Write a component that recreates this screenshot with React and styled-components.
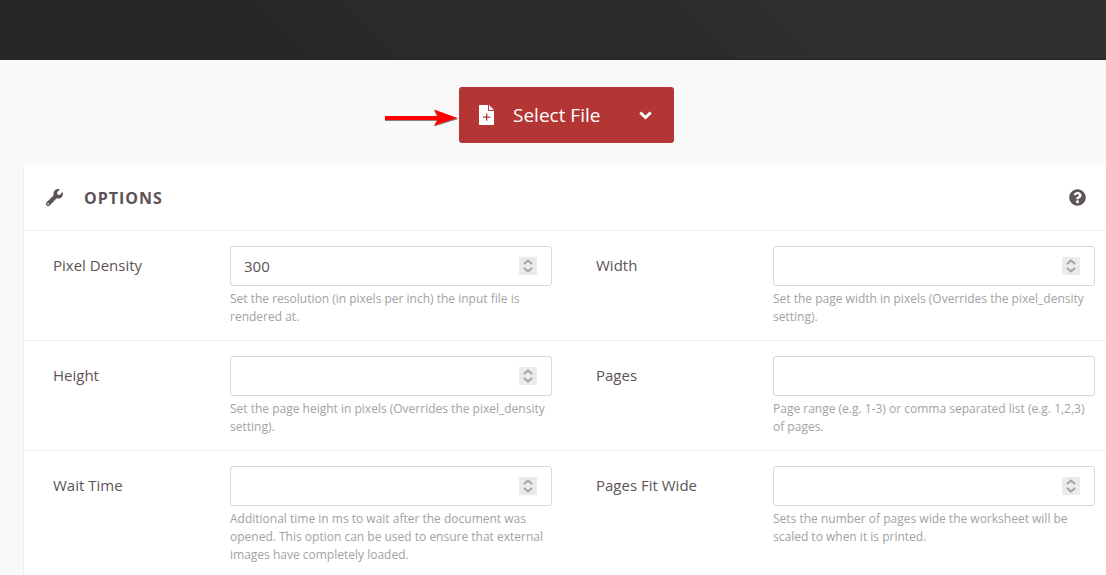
import React from 'react';
import styled, { createGlobalStyle } from 'styled-components';
import { FaWrench, FaQuestionCircle } from 'react-icons/fa';

const options = [
  {
    id: 'pixel_density',
    label: 'Pixel Density',
    value: '300',
    type: 'number',
    help: 'Set the resolution (in pixels per inch) the input file is rendered at.'
  },
  {
    id: 'width',
    label: 'Width',
    type: 'number',
    help: 'Set the page width in pixels (Overrides the pixel_density setting).'
  },
  {
    id: 'height',
    label: 'Height',
    type: 'number',
    help: 'Set the page height in pixels (Overrides the pixel_density setting).'
  },
  {
    id: 'pages',
    label: 'Pages',
    type: 'text',
    help: 'Page range (e.g. 1-3) or comma separated list (e.g. 1,2,3) of pages.'
  },
  {
    id: 'wait_time',
    label: 'Wait Time',
    type: 'number',
    help: 'Additional time in ms to wait after the document was opened. This option can be used to ensure that external images have completely loaded.'
  },
  {
    id: 'pages_fit_wide',
    label: 'Pages Fit Wide',
    type: 'number',
    help: 'Sets the number of pages wide the worksheet will be scaled to when it is printed.'
  }
];

// two options per row
const rows = [options.slice(0, 2), options.slice(2, 4), options.slice(4, 6)];

function FileAddIcon() {
  return (
    <svg width="15" height="20" viewBox="0 0 15 20" aria-hidden="true">
      <path
        fill="#fff"
        fillRule="evenodd"
        d="M1 0h8v5.2c0 .5.4.8.8.8H15v13c0 .6-.4 1-1 1H1c-.6 0-1-.4-1-1V1c0-.6.4-1 1-1zm6 8.500v3H4v1.300h3v3h1.300v-3h3v-1.300h-3v-3z"
      />
      <path fill="#fff" d="M10 0l5 5h-5z" />
    </svg>
  );
}

function ChevronIcon() {
  return (
    <svg width="13" height="9" viewBox="0 0 13 9" aria-hidden="true">
      <path fill="none" stroke="#fff" strokeWidth="3" d="M1.300 1.500l5.200 5 5.200-5" />
    </svg>
  );
}

function Arrow() {
  return (
    <svg width="74" height="18" viewBox="0 0 74 18" aria-hidden="true">
      <path fill="#8a8080" d="M0 7.500h52l-3-6L73.500 10 49 17.500l3-5.500H0z" />
      <path fill="#fe0000" d="M0 7h53l-4-6.500L72.500 9 49 16.500l3.500-5.500H0z" />
    </svg>
  );
}

function OptionField({ option }) {
  return (
    <Field>
      <Label htmlFor={option.id}>{option.label}</Label>
      <div>
        <InputBox>
          <Input
            id={option.id}
            type={option.type}
            defaultValue={option.value}
            aria-describedby={`${option.id}_help`}
          />
          {option.type === 'number' && (
            <Spinner width="18" height="18" viewBox="0 0 18 18" aria-hidden="true">
              <path d="M5 7l4-3.500L13 7M5 11l4 3.500 4-3.500" />
            </Spinner>
          )}
        </InputBox>
        <Help id={`${option.id}_help`}>{option.help}</Help>
      </div>
    </Field>
  );
}

export default function App() {
  return (
    <>
      <GlobalStyle />
      <Banner />
      <Content>
        <SelectArea>
          <ButtonWrap>
            <ArrowBox>
              <Arrow />
            </ArrowBox>
            <SelectButton type="button">
              <FileAddIcon />
              <span>Select File</span>
              <ChevronIcon />
            </SelectButton>
          </ButtonWrap>
        </SelectArea>
        <Panel>
          <PanelHeader>
            <FaWrench size={17} />
            <PanelTitle>Options</PanelTitle>
            <HelpButton type="button" aria-label="Help">
              <FaQuestionCircle size={17} />
            </HelpButton>
          </PanelHeader>
          {rows.map((row) => (
            <Row key={row[0].id}>
              {row.map((option) => (
                <OptionField key={option.id} option={option} />
              ))}
            </Row>
          ))}
        </Panel>
      </Content>
    </>
  );
}

const GlobalStyle = createGlobalStyle`
  * {
    box-sizing: border-box;
  }

  body {
    margin: 0;
    background-color: #f9f9f9;
    color: #5c5457;
    font-family: 'Open Sans', sans-serif;
    font-size: 15px;
    overflow: hidden;
  }
`;

const Banner = styled.header`
  height: 60px;
  border-bottom: 1px solid #262626;
  background: linear-gradient(
    45deg,
    #272727 27%,
    #282828 27%,
    #282828 34%,
    #2a2a2a 34%,
    #2a2a2a 41%,
    #2b2b2b 41%,
    #2b2b2b 63%,
    #2d2d2d 63%,
    #2d2d2d 70%,
    #303030 70%
  );
`;

const Content = styled.main`
  padding-left: 23px;
`;

const SelectArea = styled.div`
  display: flex;
  justify-content: center;
  padding: 27px 0 22px 4px;
`;

const ButtonWrap = styled.div`
  position: relative;
`;

const ArrowBox = styled.div`
  position: absolute;
  right: 100%;
  top: 22px;
  line-height: 0;
`;

const SelectButton = styled.button`
  display: flex;
  align-items: center;
  width: 215px;
  height: 56px;
  padding: 0 22px 0 20px;
  border: none;
  border-radius: 3px;
  background-color: #b33635;
  color: #fff;
  font-family: inherit;
  font-size: 19px;
  cursor: pointer;

  & span {
    flex: 1;
    padding-left: 19px;
    text-align: left;
  }
`;

const Panel = styled.section`
  border-left: 1px solid #eee;
  background-color: #fff;
`;

const PanelHeader = styled.div`
  display: flex;
  align-items: center;
  height: 65px;
  padding: 0 20px 0 22px;
`;

const PanelTitle = styled.h2`
  flex: 1;
  margin: 0;
  padding-left: 21px;
  font-size: 16px;
  font-weight: 700;
  letter-spacing: 1px;
  text-transform: uppercase;
`;

const HelpButton = styled.button`
  display: flex;
  padding: 0;
  border: none;
  background: none;
  color: inherit;
  cursor: pointer;
`;

const Row = styled.div`
  display: grid;
  grid-template-columns: 1fr 1fr;
  column-gap: 44px;
  padding: 15px 11px 14px 29px;
  border-top: 1px solid #eee;
`;

const Field = styled.div`
  display: grid;
  grid-template-columns: 177px 1fr;
`;

const Label = styled.label`
  line-height: 38px;
`;

const InputBox = styled.div`
  position: relative;
`;

const Input = styled.input`
  display: block;
  width: 100%;
  height: 40px;
  padding: 0 40px 0 13px;
  border: 1px solid #d8d8d8;
  border-radius: 3px;
  background-color: #fff;
  color: inherit;
  font-family: inherit;
  font-size: 15px;
  appearance: textfield;

  &::-webkit-inner-spin-button {
    appearance: none;
    margin: 0;
  }
`;

const Spinner = styled.svg`
  position: absolute;
  top: 11px;
  right: 15px;
  background-color: #ebebeb;
  pointer-events: none;

  & path {
    fill: none;
    stroke: #a3a3a6;
    stroke-width: 2;
  }
`;

const Help = styled.p`
  margin: 4px 0 0;
  color: #a2a2a2;
  font-size: 12px;
  line-height: 18px;
`;
